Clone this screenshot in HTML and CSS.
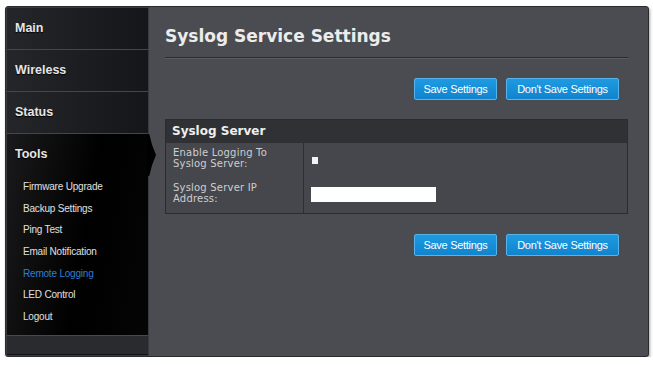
FILE: index.html
```html
<!DOCTYPE html>
<html lang="en">

<head>
    <meta charset="UTF-8">
    <meta name="viewport" content="width=device-width, initial-scale=1.0">
    <title>Syslog Service Settings</title>
    <link rel="stylesheet" href="styles.css">
</head>

<body>

    <div class="frame">
        <div class="side">
            <div class="menu">Main</div>
            <div class="menu">Wireless</div>
            <div class="menu">Status</div>
            <div class="tools">
                <div class="menu active">Tools</div>
                <div class="sub">
                    <p>Firmware Upgrade</p>
                    <p>Backup Settings</p>
                    <p>Ping Test</p>
                    <p>Email Notification</p>
                    <p class="current">Remote Logging</p>
                    <p>LED Control</p>
                    <p>Logout</p>
                </div>
            </div>
            <div class="side-foot"></div>
        </div>

        <div class="main">
            <h1>Syslog Service Settings</h1>

            <div class="btns">
                <button>Save Settings</button>
                <button>Don't Save Settings</button>
            </div>

            <div class="panel">
                <div class="panel-head">Syslog Server</div>
                <div class="row">
                    <div class="label">Enable Logging To Syslog Server:</div>
                    <div class="value"><span class="check"></span></div>
                </div>
                <div class="row">
                    <div class="label">Syslog Server IP Address:</div>
                    <div class="value"><span class="field"></span></div>
                </div>
            </div>

            <div class="btns">
                <button>Save Settings</button>
                <button>Don't Save Settings</button>
            </div>
        </div>
    </div>

</body>

</html>
```

FILE: styles.css
```css
* {
    padding: 0;
    margin: 0;
    box-sizing: border-box;
}

body {
    background: #fff;
    font-family: "DejaVu Sans", Verdana, sans-serif;
}

.frame {
    display: flex;
    width: 644px;
    height: 351px;
    margin: 6px 0 0 5px;
    background: #4a4c51;
    border: 1px solid #2a2b2e;
    border-radius: 3px;
    box-shadow: 1px 2px 3px rgba(0, 0, 0, 0.35);
}

/* left menu */
.side {
    width: 143px;
    display: flex;
    flex-direction: column;
    background: #111214;
    border: 1px solid #3a3b3f;
}

.menu {
    height: 42px;
    padding-left: 8px;
    line-height: 40px;
    font-family: "Liberation Sans", Arial, sans-serif;
    font-size: 12.5px;
    font-weight: bold;
    color: #e6e6e6;
    text-shadow: 0 1px 1px #000;
    background: linear-gradient(90deg, #25262a, #1b1c1f 60%, #15161a);
    border-bottom: 1px solid #45464a;
}

.tools {
    flex: 1;
    position: relative;
    background: linear-gradient(100deg, #1a1a1c, #000 55%, #050505);
}

.tools .menu.active {
    background: none;
    border-bottom: none;
}

.tools::after {
    content: "";
    position: absolute;
    top: 0;
    right: -8px;
    width: 9px;
    height: 42px;
    background: #000;
    clip-path: polygon(0 0, 25% 0, 55% 25%, 100% 50%, 55% 75%, 25% 100%, 0 100%);
}

.sub p {
    height: 21.7px;
    line-height: 21.7px;
    padding-left: 16px;
    font-family: "Liberation Sans", Arial, sans-serif;
    font-size: 10px;
    color: #e0e0e0;
    letter-spacing: -0.2px;
}

.sub p.current {
    color: #2a7fd8;
}

.side-foot {
    height: 19px;
    margin-bottom: 1px;
    background: #2a2b2e;
    border-top: 1px solid #48494c;
}

/* content */
.main {
    flex: 1;
    padding: 19px 20px 0 16px;
}

.main h1 {
    font-size: 17px;
    font-weight: bold;
    color: #ececec;
    height: 32px;
    border-bottom: 1px solid #2b2c30;
    box-shadow: 0 1px 0 #5a5c61;
}

.btns {
    display: flex;
    justify-content: flex-end;
    gap: 9px;
    padding-right: 9px;
    margin: 20px 0 19px;
}

.btns button {
    height: 22px;
    padding: 0 6px;
    font-family: "Liberation Sans", Arial, sans-serif;
    font-size: 11px;
    color: #fff;
    letter-spacing: -0.3px;
    background: linear-gradient(#1f9ae0, #0f84cf);
    border: 1px solid #55b4ea;
    border-radius: 2px;
}

.btns button:first-child {
    width: 83px;
}

.btns button:last-child {
    width: 113px;
}

.panel {
    background: #45474c;
    border: 1px solid #2b2c30;
}

.panel-head {
    height: 23px;
    line-height: 23px;
    padding-left: 6px;
    font-size: 12px;
    font-weight: bold;
    color: #eee;
    background: #2f3135;
}

.row {
    display: flex;
    height: 35px;
}

.row .label {
    width: 138px;
    padding: 4px 30px 0 7px;
    font-size: 10px;
    line-height: 11px;
    letter-spacing: 0.2px;
    color: #cdced1;
    border-right: 1px solid #2e2f33;
}

.row .value {
    flex: 1;
    display: flex;
    align-items: center;
    padding-left: 7px;
}

.check {
    display: block;
    width: 6px;
    height: 7px;
    background: #f2f2f2;
    margin: 0 0 0 1px;
}

.field {
    display: block;
    width: 125px;
    height: 15px;
    background: #fff;
    margin-bottom: 2px;
}
```
